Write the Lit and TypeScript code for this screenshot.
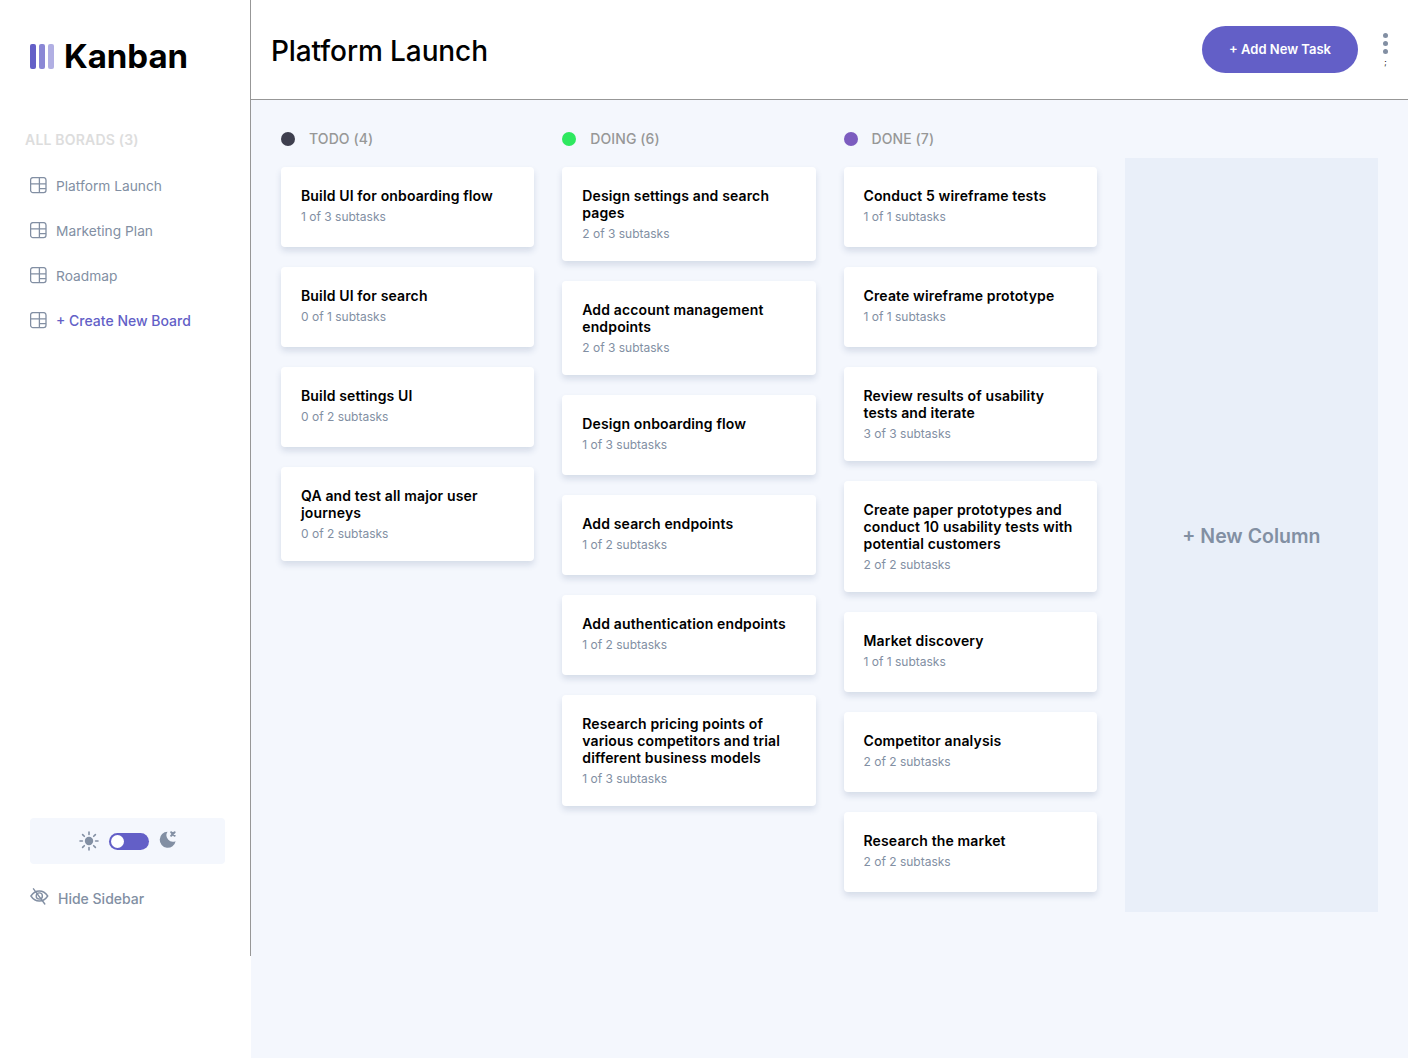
import { LitElement, html, css, svg } from "lit";
import { customElement } from "lit/decorators.js";

const boards = ["Platform Launch", "Marketing Plan", "Roadmap"];

const columns = [
  {
    name: "TODO (4)",
    color: "#3e3f4e",
    tasks: [
      ["Build UI for onboarding flow", "1 of 3 subtasks"],
      ["Build UI for search", "0 of 1 subtasks"],
      ["Build settings UI", "0 of 2 subtasks"],
      ["QA and test all major user journeys", "0 of 2 subtasks"],
    ],
  },
  {
    name: "DOING (6)",
    color: "#2ee85f",
    tasks: [
      ["Design settings and search pages", "2 of 3 subtasks"],
      ["Add account management endpoints", "2 of 3 subtasks"],
      ["Design onboarding flow", "1 of 3 subtasks"],
      ["Add search endpoints", "1 of 2 subtasks"],
      ["Add authentication endpoints", "1 of 2 subtasks"],
      ["Research pricing points of various competitors and trial different business models", "1 of 3 subtasks"],
    ],
  },
  {
    name: "DONE (7)",
    color: "#7c5cbf",
    tasks: [
      ["Conduct 5 wireframe tests", "1 of 1 subtasks"],
      ["Create wireframe prototype", "1 of 1 subtasks"],
      ["Review results of usability tests and iterate", "3 of 3 subtasks"],
      ["Create paper prototypes and conduct 10 usability tests with potential customers", "2 of 2 subtasks"],
      ["Market discovery", "1 of 1 subtasks"],
      ["Competitor analysis", "2 of 2 subtasks"],
      ["Research the market", "2 of 2 subtasks"],
    ],
  },
];

const boardIcon = svg`<svg class="board-icon" width="17" height="17" viewBox="0 0 17 17" fill="none" stroke="#828fa3" stroke-width="1.3">
  <rect x="0.6" y="0.6" width="15.4" height="15" rx="2.4" />
  <path d="M9.4 .6v15M.6 6.8h15.4M9.4 11.6h6.600" />
</svg>`;

const sunIcon = svg`<svg width="20" height="20" viewBox="0 0 20 20" fill="#828fa3">
  <circle cx="10" cy="10" r="4.2" />
  <path d="M10 1v2.400M10 16.600V19M1 10h2.400M16.600 10H19M3.600 3.600l1.700 1.700M14.700 14.700l1.700 1.700M3.600 16.400l1.700-1.700M14.700 5.300l1.700-1.700" stroke="#828fa3" stroke-width="1.6" stroke-linecap="round" />
</svg>`;

const moonIcon = svg`<svg width="18" height="18" viewBox="0 0 18 18" fill="#828fa3">
  <path d="M8.500 .8A8 8 0 1 0 16.600 10.200A6.500 6.500 0 0 1 8.500 .8Z" />
  <path d="M12.200 1.300l3.400 3.400M15.600 1.300l-3.400 3.400" stroke="#828fa3" stroke-width="2" stroke-linecap="round" />
</svg>`;

const eyeIcon = svg`<svg width="19" height="17" viewBox="0 0 19 17" fill="none" stroke="#828fa3" stroke-width="1.4">
  <path d="M.9 8c2.300-3.400 5-5 8.400-5s6.200 1.600 8.400 5c-2.200 3.400-5 5-8.400 5S3.200 11.400.9 8Z" />
  <circle cx="9.300" cy="8" r="3.100" />
  <path d="M3.500.8 14.800 16" stroke-linecap="round" />
</svg>`;

@customElement("app-root")
export class AppRoot extends LitElement {
  static styles = css`
    :host {
      display: block;
      font-family: Inter, "Liberation Sans", sans-serif;
      color: #000;
    }

    .page {
      display: flex;
      min-height: 100vh;
      background: #f4f7fd;
    }

    /* Sidebar */
    .side-wrap {
      width: 251px;
      flex: none;
      background: #fff;
    }
    .sidebar {
      box-sizing: border-box;
      height: 956px;
      border-right: 1px solid #979797;
      display: flex;
      flex-direction: column;
      padding-top: 34px;
    }
    .logo {
      display: flex;
      align-items: center;
      gap: 10px;
      padding-left: 30px;
      height: 44px;
    }
    .bars {
      display: flex;
      gap: 3px;
    }
    .bars i {
      display: block;
      width: 6px;
      height: 25px;
      border-radius: 2px;
      background: #635fc7;
    }
    .bars i:nth-child(2) {
      opacity: 0.75;
    }
    .bars i:nth-child(3) {
      opacity: 0.5;
    }
    .logo span {
      font-size: 33px;
      font-weight: 700;
      letter-spacing: -0.03px;
    }
    .all {
      margin: 53px 0 0 25px;
      font-size: 14px;
      line-height: 17px;
      font-weight: 600;
      color: #ddd;
      letter-spacing: 0.2px;
    }
    .nav {
      margin-top: 15px;
      display: flex;
      flex-direction: column;
    }
    .nav-item {
      height: 45px;
      display: flex;
      align-items: center;
      gap: 9px;
      padding-left: 30px;
      font-size: 13.75px;
      color: #828fa3;
    }
    .nav-item.create {
      font-size: 14px;
      color: #635fc7;
      font-weight: 500;
    }
    .bottom {
      margin-top: auto;
      padding: 0 25px 49px 30px;
    }
    .theme {
      height: 46px;
      border-radius: 4px;
      background: #f4f7fd;
      display: flex;
      align-items: center;
      justify-content: center;
      gap: 10px;
    }
    .switch {
      box-sizing: border-box;
      width: 40px;
      height: 17px;
      border-radius: 9px;
      background: #635fc7;
      padding: 2px;
    }
    .switch i {
      display: block;
      width: 13px;
      height: 13px;
      border-radius: 50%;
      background: #fff;
    }
    .theme svg:last-child {
      margin-top: -2px;
    }
    .hide {
      margin-top: 26px;
      display: flex;
      align-items: center;
      gap: 9px;
      font-size: 14px;
      font-weight: 500;
      line-height: 17px;
      color: #828fa3;
    }
    .hide svg {
      margin-top: -5px;
    }

    /* Header */
    .main {
      flex: 1;
      min-width: 0;
      display: flex;
      flex-direction: column;
    }
    .header {
      box-sizing: border-box;
      height: 100px;
      background: #fff;
      border-bottom: 1px solid #979797;
      display: flex;
      align-items: flex-start;
      padding: 26px 20px 0;
    }
    h1 {
      margin: 6px 0 0;
      flex: 1;
      font-size: 28px;
      line-height: 38px;
      font-weight: 500;
      letter-spacing: -0.1px;
    }
    .add {
      width: 156px;
      height: 47px;
      border: 0;
      border-radius: 24px;
      background: #635fc7;
      color: #fff;
      font: 600 13px Inter, sans-serif;
      padding: 0 0 2px;
    }
    .more {
      margin: 7px 0 0 25px;
      display: flex;
      flex-direction: column;
      align-items: center;
      gap: 3px;
      width: 5px;
    }
    .more i {
      display: block;
      width: 5px;
      height: 5px;
      border-radius: 50%;
      background: #828fa3;
    }
    .more b {
      font-size: 8px;
      line-height: 8px;
      font-weight: 400;
      margin-top: 1px;
    }

    /* Board */
    .board {
      flex: 1;
      display: grid;
      grid-template-columns: repeat(4, 1fr);
      gap: 28px;
      padding: 30px 30px 0;
      align-items: start;
      align-content: start;
    }
    .col-head {
      display: flex;
      align-items: center;
      gap: 14px;
      height: 18px;
      margin-bottom: 19px;
      font-size: 14px;
      font-weight: 500;
      letter-spacing: 0.1px;
      color: #979797;
    }
    .col-head span:last-child {
      margin-bottom: 2px;
    }
    .dot {
      width: 14px;
      height: 14px;
      border-radius: 50%;
    }
    .card {
      box-sizing: border-box;
      min-height: 80px;
      margin-bottom: 20px;
      padding: 20px 20px 20px;
      background: #fff;
      border-radius: 4px;
      box-shadow: 0 4px 6px rgba(54, 78, 126, 0.16);
    }
    .title {
      font-size: 14px;
      line-height: 17px;
      font-weight: 600;
      letter-spacing: 0.14px;
    }
    .sub {
      margin-top: 5px;
      font-size: 12px;
      line-height: 15px;
      color: #828fa3;
    }
    .new-col {
      align-self: stretch;
      margin-top: 28px;
      height: 754px;
      box-sizing: border-box;
      padding-top: 2px;
      background: #e9eff9;
      display: flex;
      align-items: center;
      justify-content: center;
      font-size: 19.5px;
      font-weight: 600;
      color: #828fa3;
    }
  `;

  render() {
    return html`
      <div class="page">
        <div class="side-wrap">
          <aside class="sidebar">
            <div class="logo">
              <div class="bars"><i></i><i></i><i></i></div>
              <span>Kanban</span>
            </div>
            <div class="all">ALL BORADS (3)</div>
            <div class="nav">
              ${boards.map((b) => html`<div class="nav-item">${boardIcon}${b}</div>`)}
              <div class="nav-item create">${boardIcon}+ Create New Board</div>
            </div>
            <div class="bottom">
              <div class="theme">
                ${sunIcon}
                <div class="switch"><i></i></div>
                ${moonIcon}
              </div>
              <div class="hide">${eyeIcon}Hide Sidebar</div>
            </div>
          </aside>
        </div>
        <div class="main">
          <header class="header">
            <h1>Platform Launch</h1>
            <button class="add">+ Add New Task</button>
            <div class="more"><i></i><i></i><i></i><b>;</b></div>
          </header>
          <div class="board">
            ${columns.map(
              (c) => html`
                <section>
                  <div class="col-head">
                    <span class="dot" style="background:${c.color}"></span><span>${c.name}</span>
                  </div>
                  ${c.tasks.map(
                    (t) => html`
                      <div class="card">
                        <div class="title">${t[0]}</div>
                        <div class="sub">${t[1]}</div>
                      </div>
                    `
                  )}
                </section>
              `
            )}
            <div class="new-col">+ New Column</div>
          </div>
        </div>
      </div>
    `;
  }
}
